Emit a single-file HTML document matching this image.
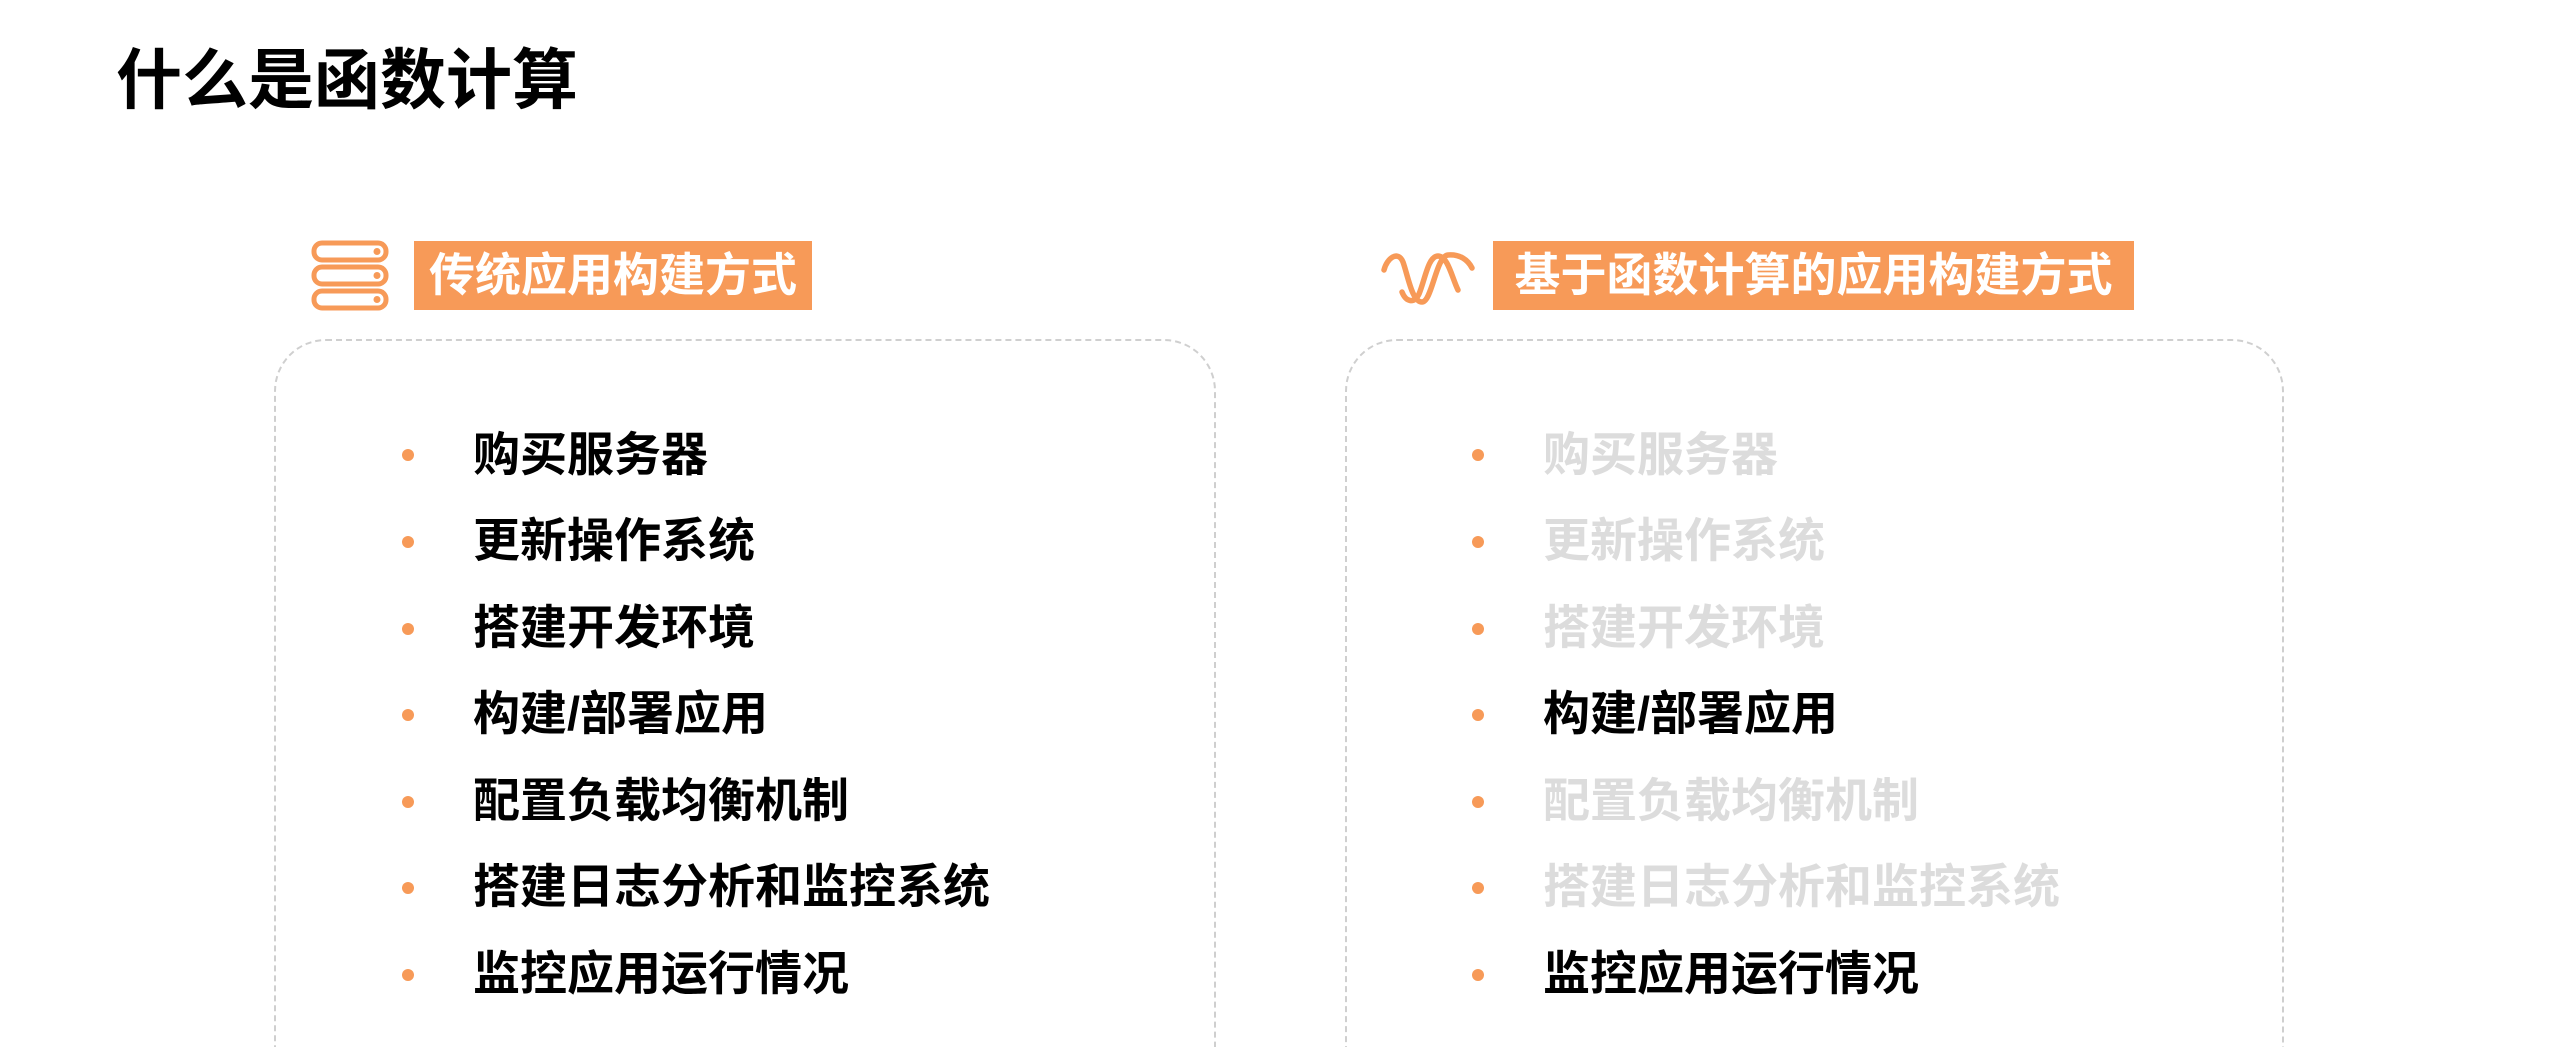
<!DOCTYPE html>
<html style="overflow:hidden;height:1047px"><head><meta charset="utf-8"><style>
html,body{margin:0;overflow:hidden}
body{width:2560px;height:1047px;background:#fff;position:relative;font-family:"Liberation Sans","Noto Sans CJK SC",sans-serif;}
.t{position:absolute;left:116px;top:40px;font-size:66px;font-weight:bold;color:#000;line-height:80px;white-space:nowrap}
.lab{position:absolute;top:241px;height:69px;background:#f79a58;color:#fff;font-size:46px;font-weight:bold;line-height:69px;text-align:center;white-space:nowrap}
.box{position:absolute;top:339px;height:760px;border:2px dashed #cfcfcf;border-radius:52px;box-sizing:border-box}
.row{position:absolute;font-size:47px;font-weight:bold;line-height:56px;white-space:nowrap;color:#000}
.row.g{color:#dcdcdc}
.dot{position:absolute;width:12px;height:12px;border-radius:50%;background:#f79a58}
</style></head><body>
<div class="t">什么是函数计算</div>

<svg style="position:absolute;left:308px;top:238px" width="84" height="74" viewBox="0 0 84 74">
<g fill="none" stroke="#f79a58" stroke-width="5">
<rect x="6" y="5" width="72" height="17" rx="8"/>
<rect x="6" y="29" width="72" height="17" rx="8"/>
<rect x="6" y="53" width="72" height="17" rx="8"/>
</g>
<g fill="#f79a58"><circle cx="69" cy="13.5" r="3.5"/><circle cx="69" cy="37.5" r="3.5"/><circle cx="69" cy="61.5" r="3.5"/></g>
</svg>
<div class="lab" style="left:414px;width:398px">传统应用构建方式</div>

<svg style="position:absolute;left:1370px;top:230px" width="130" height="90" viewBox="0 0 130 90">
<g fill="none" stroke="#f79a58" stroke-width="5.5" stroke-linecap="round">
<path d="M14,40 C17,28 28,20 33,32 C38,46 42,72 52,72 C62,72 66,26 78,25 C90,24 98,30 102,38"/>
<path d="M32,62 C36,72 44,74 49,64 C55,50 58,26 68,26 C78,26 82,48 88,60"/>
</g>
</svg>
<div class="lab" style="left:1493px;width:641px">基于函数计算的应用构建方式</div>

<div class="box" style="left:274px;width:942px"></div>
<div class="box" style="left:1345px;width:939px"></div>

<div class="dot" style="left:402px;top:449px"></div><div class="row" style="left:473px;top:427px">购买服务器</div>
<div class="dot" style="left:402px;top:536px"></div><div class="row" style="left:473px;top:513px">更新操作系统</div>
<div class="dot" style="left:402px;top:623px"></div><div class="row" style="left:473px;top:600px">搭建开发环境</div>
<div class="dot" style="left:402px;top:709px"></div><div class="row" style="left:473px;top:686px">构建/部署应用</div>
<div class="dot" style="left:402px;top:796px"></div><div class="row" style="left:473px;top:773px">配置负载均衡机制</div>
<div class="dot" style="left:402px;top:882px"></div><div class="row" style="left:473px;top:859px">搭建日志分析和监控系统</div>
<div class="dot" style="left:402px;top:969px"></div><div class="row" style="left:473px;top:946px">监控应用运行情况</div>

<div class="dot" style="left:1472px;top:449px"></div><div class="row g" style="left:1543px;top:427px">购买服务器</div>
<div class="dot" style="left:1472px;top:536px"></div><div class="row g" style="left:1543px;top:513px">更新操作系统</div>
<div class="dot" style="left:1472px;top:623px"></div><div class="row g" style="left:1543px;top:600px">搭建开发环境</div>
<div class="dot" style="left:1472px;top:709px"></div><div class="row" style="left:1543px;top:686px">构建/部署应用</div>
<div class="dot" style="left:1472px;top:796px"></div><div class="row g" style="left:1543px;top:773px">配置负载均衡机制</div>
<div class="dot" style="left:1472px;top:882px"></div><div class="row g" style="left:1543px;top:859px">搭建日志分析和监控系统</div>
<div class="dot" style="left:1472px;top:969px"></div><div class="row" style="left:1543px;top:946px">监控应用运行情况</div>
</body></html>
